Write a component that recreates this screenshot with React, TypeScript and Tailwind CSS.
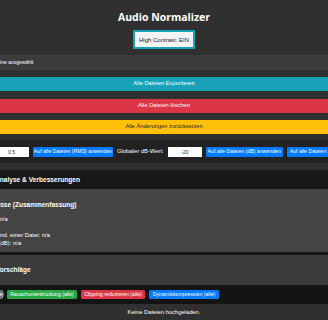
export default function App() {
  return (
    <div className="flex h-[320px] w-[328px] flex-col items-center overflow-hidden bg-[#303030] font-['Liberation_Sans',Arial,sans-serif] text-white">
      <h1 className="pt-[10px] font-['Open_Sans',sans-serif] text-[10.5px] leading-[14px] font-bold">
        Audio Normalizer
      </h1>
      <button className="mt-[6px] h-[19px] shrink-0 border-2 border-[#17a2b8] bg-[#f4f4f4] px-[4px] text-[6px] leading-none text-[#222]">
        High Contrast: EIN
      </button>

      <main className="mt-[6px] flex w-[440px] shrink-0 flex-col">
        {/* file picker */}
        <div className="flex h-[15px] items-center gap-[4px] bg-[#3c3c3c] pl-[8px] text-[5px]">
          <span className="w-[38px] shrink-0 truncate">Dateien auswählen</span>
          <span>Keine ausgewählt</span>
        </div>

        <button className="mt-[7px] h-[14px] w-full bg-[#17a2b8] text-[5.7px] leading-none text-white">
          Alle Dateien Exportieren
        </button>
        <button className="mt-[8px] h-[14px] w-full bg-[#dc3545] text-[5.7px] leading-none text-white">
          Alle Dateien löschen
        </button>
        <button className="mt-[7px] h-[14px] w-full bg-[#ffc107] text-[5.7px] leading-none text-[#212529]">
          Alle Änderungen zurücksetzen
        </button>

        {/* global values */}
        <div className="mt-[6px] flex h-[23px] items-center gap-[4px] bg-[#222] text-[5.85px]">
          <span className="w-[46px] shrink-0 text-right whitespace-nowrap">Globaler RMS-Wert:</span>
          <input
            defaultValue="0.5"
            className="h-[10px] w-[35px] shrink-0 bg-white text-center text-[5.2px] text-[#333] outline-none"
          />
          <button className="h-[10px] w-[80px] shrink-0 rounded-[1px] bg-[#007bff] text-[5.2px] leading-none whitespace-nowrap">
            Auf alle Dateien (RMS) anwenden
          </button>
          <span className="shrink-0 whitespace-nowrap">Globaler dB-Wert:</span>
          <input
            defaultValue="-20"
            className="h-[10px] w-[34px] shrink-0 bg-white text-center text-[5.2px] text-[#333] outline-none"
          />
          <button className="h-[10px] w-[77px] shrink-0 rounded-[1px] bg-[#007bff] text-[5.2px] leading-none whitespace-nowrap">
            Auf alle Dateien (dB) anwenden
          </button>
          <button className="h-[10px] shrink-0 rounded-[1px] bg-[#007bff] px-[3px] text-[5.2px] leading-none whitespace-nowrap">
            Auf alle Dateien (ESB) anwenden
          </button>
        </div>

        {/* analysis */}
        <section className="mt-[7px]">
          <h2 className="flex h-[19px] items-center bg-[#181818] pl-[51px] text-[6.6px] font-bold">
            Analyse &amp; Verbesserungen
          </h2>
          <div className="h-[63px] bg-[#444] pt-[12px] pl-[32px] text-[5.9px] leading-[8px]">
            <h3 className="text-[6.5px] font-bold">Ergebnisse (Zusammenfassung)</h3>
            <p className="mt-[6px]">Dateien: n/a</p>
            <p className="mt-[8px]">Clip in mind. einer Datei: n/a</p>
            <p>Lautheit (dB): n/a</p>
          </div>
          <div className="h-[3px] bg-[#161616]" />
          <h3 className="flex h-[30px] items-center bg-[#3c3c3c] pl-[52px] text-[6.5px] font-bold">
            Vorschläge
          </h3>
          <div className="flex h-[19px] items-center gap-[4px] bg-[#141414] pl-[15px] text-[5.2px] leading-none">
            <button className="h-[9px] w-[44px] shrink-0 rounded-[1.5px] bg-[#6c757d] whitespace-nowrap">
              Normalisieren (alle)
            </button>
            <button className="h-[9px] w-[70px] shrink-0 rounded-[1.5px] bg-[#28a745] whitespace-nowrap">
              Rauschunterdrückung (alle)
            </button>
            <button className="h-[9px] w-[64px] shrink-0 rounded-[1.5px] bg-[#dc3545] whitespace-nowrap">
              Clipping reduzieren (alle)
            </button>
            <button className="h-[9px] w-[70px] shrink-0 rounded-[1.5px] bg-[#007bff] whitespace-nowrap">
              Dynamikkompression (alle)
            </button>
          </div>
        </section>

        <p className="pt-[4px] text-center text-[5.8px] leading-[8px]">Keine Dateien hochgeladen.</p>
      </main>
    </div>
  );
}
